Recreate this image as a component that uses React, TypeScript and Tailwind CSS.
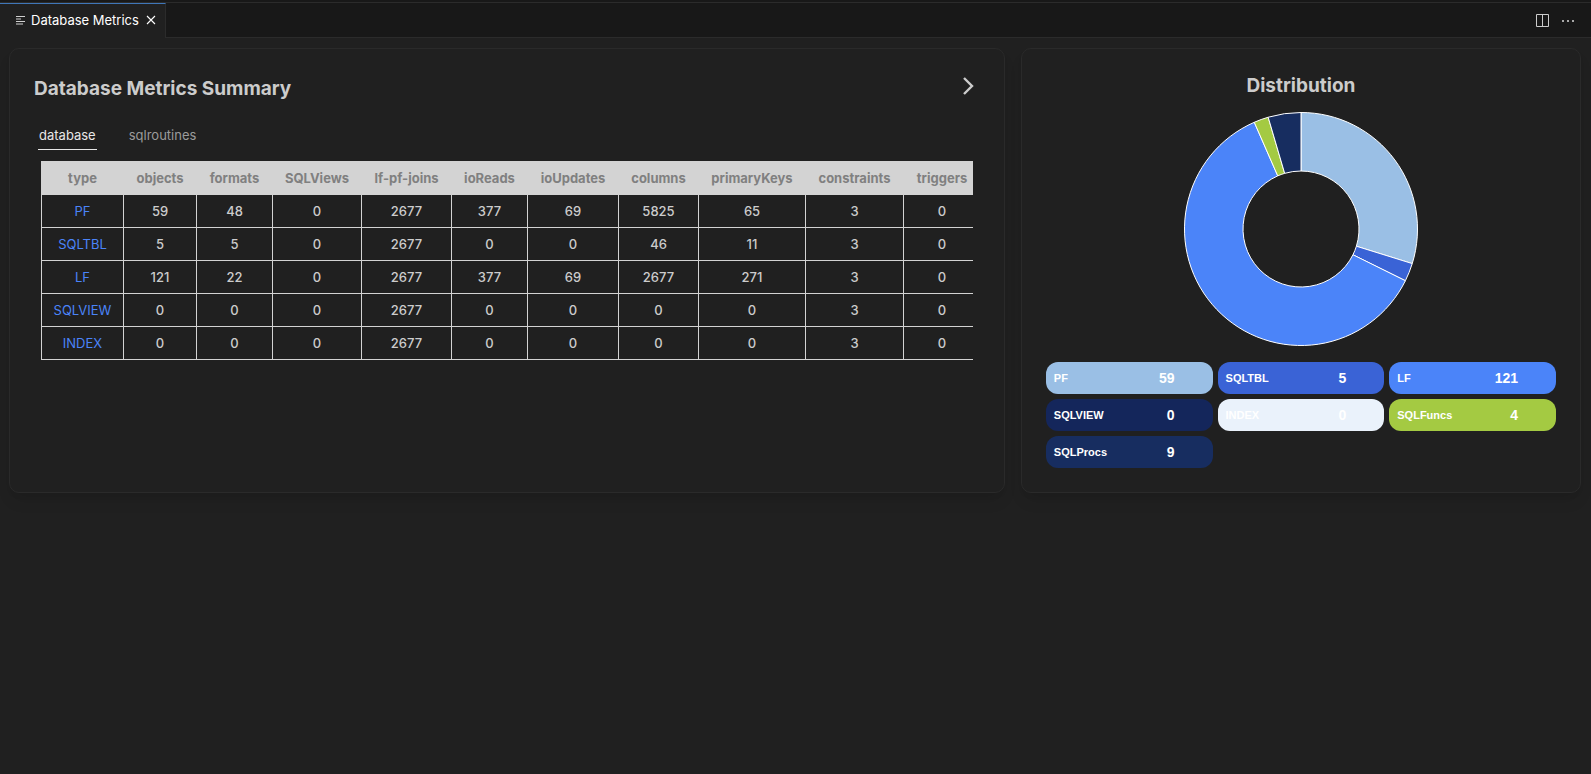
import { useState } from 'react';

type MetricRow = {
  type: string;
  values: number[];
};

type Slice = {
  label: string;
  value: number;
  fill: string;
  pill: string;
};

const columns = [
  { name: 'type', width: 'w-[82px]' },
  { name: 'objects', width: 'w-[73px]' },
  { name: 'formats', width: 'w-[76px]' },
  { name: 'SQLViews', width: 'w-[89px]' },
  { name: 'lf-pf-joins', width: 'w-[90px]' },
  { name: 'ioReads', width: 'w-[76px]' },
  { name: 'ioUpdates', width: 'w-[91px]' },
  { name: 'columns', width: 'w-[80px]' },
  { name: 'primaryKeys', width: 'w-[107px]' },
  { name: 'constraints', width: 'w-[98px]' },
  { name: 'triggers', width: 'w-[77px]' },
];

const rows: MetricRow[] = [
  { type: 'PF', values: [59, 48, 0, 2677, 377, 69, 5825, 65, 3, 0] },
  { type: 'SQLTBL', values: [5, 5, 0, 2677, 0, 0, 46, 11, 3, 0] },
  { type: 'LF', values: [121, 22, 0, 2677, 377, 69, 2677, 271, 3, 0] },
  { type: 'SQLVIEW', values: [0, 0, 0, 2677, 0, 0, 0, 0, 3, 0] },
  { type: 'INDEX', values: [0, 0, 0, 2677, 0, 0, 0, 0, 3, 0] },
];

const slices: Slice[] = [
  { label: 'PF', value: 59, fill: '#9abfe5', pill: 'bg-[#9abfe5]' },
  { label: 'SQLTBL', value: 5, fill: '#3a63d6', pill: 'bg-[#3a63d6]' },
  { label: 'LF', value: 121, fill: '#4b84f9', pill: 'bg-[#4b84f9]' },
  { label: 'SQLVIEW', value: 0, fill: '#14265b', pill: 'bg-[#14265b]' },
  { label: 'INDEX', value: 0, fill: '#eaf2fb', pill: 'bg-[#eaf2fb]' },
  { label: 'SQLFuncs', value: 4, fill: '#a4ca42', pill: 'bg-[#a4ca42]' },
  { label: 'SQLProcs', value: 9, fill: '#172d60', pill: 'bg-[#172d60]' },
];

const tabs = ['database', 'sqlroutines'];

const cardClass =
  'min-w-0 rounded-[10px] border border-[#2a2a2a] bg-[#202020] px-6 shadow-[0_10px_15px_-3px_rgba(0,0,0,0.1),0_4px_6px_-2px_rgba(0,0,0,0.05)]';

function arcPath(start: number, end: number, outer: number, inner: number) {
  const point = (radius: number, turn: number) => {
    const angle = turn * 2 * Math.PI;
    return `${radius * Math.sin(angle)} ${-radius * Math.cos(angle)}`;
  };
  const large = end - start > 0.5 ? 1 : 0;
  return `M${point(outer, start)}A${outer} ${outer} 0 ${large} 1 ${point(outer, end)}L${point(inner, end)}A${inner} ${inner} 0 ${large} 0 ${point(inner, start)}Z`;
}

function DonutChart() {
  const total = slices.reduce((sum, slice) => sum + slice.value, 0);
  let offset = 0;

  return (
    <svg viewBox="-118 -118 236 236" className="mx-auto size-[236px]" role="img" aria-label="Distribution">
      {slices
        .filter((slice) => slice.value > 0)
        .map((slice) => {
          const start = offset;
          offset += slice.value / total;
          return (
            <path
              key={slice.label}
              d={arcPath(start, offset, 116.5, 58)}
              fill={slice.fill}
              stroke="#fff"
              strokeWidth="1"
            />
          );
        })}
    </svg>
  );
}

function EditorBar() {
  return (
    <header className="bg-[#181818] pt-[2px]">
      <div className="flex h-9 items-stretch border-t border-[#2b2b2b]">
        <div className="flex items-center border-t border-r border-t-[#3f76b8] border-r-[#2b2b2b] bg-[#202020] pr-[6px] pb-[2px] pl-4">
          <svg viewBox="0 0 10 10" className="mr-[5px] size-[10px] shrink-0" stroke="#d0d0d0" strokeWidth="1" aria-hidden="true">
            <path d="M0 1.5h9M0 4h5M0 6.5h9M0 9h7" />
          </svg>
          <span className="text-[13px] leading-5 text-white">Database Metrics</span>
          <button type="button" aria-label="Close tab" className="ml-1 flex size-4 items-center justify-center">
            <svg viewBox="0 0 10 10" className="size-[10px]" stroke="#fff" strokeWidth="1.1" aria-hidden="true">
              <path d="M1 1l8 8M9 1l-8 8" />
            </svg>
          </button>
        </div>
        <div className="flex flex-1 items-center justify-end gap-[13px] border-b border-[#2b2b2b] pr-4">
          <button type="button" aria-label="Split editor">
            <svg viewBox="0 0 13 13" className="size-[13px]" fill="none" stroke="#cccccc" strokeWidth="1" aria-hidden="true">
              <path d="M.5.5h12v12H.5zM6.5.5v12" />
            </svg>
          </button>
          <button type="button" aria-label="More actions">
            <svg viewBox="0 0 13 13" className="size-[13px]" fill="#a8a8a8" aria-hidden="true">
              <path d="M0 6h2v2H0zM5 6h2v2H5zM10 6h2v2h-2z" />
            </svg>
          </button>
        </div>
      </div>
    </header>
  );
}

export default function App() {
  const [activeTab, setActiveTab] = useState('database');

  return (
    <div className="min-h-screen bg-[#202020] font-['Inter',sans-serif] text-[#cccccc]">
      <EditorBar />
      <main className="grid grid-cols-[16fr_9fr] gap-4 px-[10px] pt-[10px] pl-[9px]">
        <section className={`${cardClass} pb-[131px]`}>
          <div className="flex items-center justify-between pt-6 pr-[6px]">
            <h1 className="text-[19px] leading-8 font-bold">Database Metrics Summary</h1>
            <button type="button" aria-label="Next" className="pb-[6px]">
              <svg viewBox="0 0 12 18" className="h-[18px] w-3" fill="none" stroke="#cccccc" strokeWidth="2.4" aria-hidden="true">
                <path d="M2 1l8 8-8 8" />
              </svg>
            </button>
          </div>
          <div role="tablist" className="mt-[15px] flex gap-7 pl-1">
            {tabs.map((tab) => (
              <button
                key={tab}
                type="button"
                role="tab"
                aria-selected={tab === activeTab}
                onClick={() => setActiveTab(tab)}
                className={
                  tab === activeTab
                    ? 'border-b border-[#e7e7e7] px-px pt-[5px] pb-1 text-[13px] leading-5 text-[#e7e7e7]'
                    : 'border-b border-transparent px-1 pt-[5px] pb-1 text-[13px] leading-5 text-[#9b9b9b]'
                }
              >
                {tab}
              </button>
            ))}
          </div>
          <div className="mt-[11px] mr-[7px] ml-[7px] overflow-hidden">
            <table className="w-[939px] table-fixed border-collapse text-center text-[13px] leading-5">
              <thead>
                <tr className="h-[33px] bg-[#d3d3d3] text-[#808080]">
                  {columns.map((column) => (
                    <th key={column.name} scope="col" className={`${column.width} border border-[#d3d3d3] font-bold`}>
                      {column.name}
                    </th>
                  ))}
                </tr>
              </thead>
              <tbody>
                {rows.map((row) => (
                  <tr key={row.type} className="h-[33px]">
                    <td className="border border-[#d3d3d3]">
                      <a href="#" className="text-[#4b84f9]">
                        {row.type}
                      </a>
                    </td>
                    {row.values.map((value, index) => (
                      <td key={columns[index + 1].name} className="border border-[#d3d3d3] font-medium">
                        {value}
                      </td>
                    ))}
                  </tr>
                ))}
              </tbody>
            </table>
          </div>
        </section>

        <section className={`${cardClass} pb-6`}>
          <h2 className="pt-[21px] text-center text-[19px] leading-8 font-bold">Distribution</h2>
          <div className="mt-[9px]">
            <DonutChart />
          </div>
          <ul className="mt-[15px] grid grid-cols-3 gap-[5px] font-['Liberation_Sans',sans-serif] font-bold text-white">
            {slices.map((slice) => (
              <li
                key={slice.label}
                className={`flex h-8 items-center justify-between rounded-xl pr-[38px] pl-2 ${slice.pill}`}
              >
                <span className="text-[11px]">{slice.label}</span>
                <span className="text-[14px]">{slice.value}</span>
              </li>
            ))}
          </ul>
        </section>
      </main>
    </div>
  );
}
